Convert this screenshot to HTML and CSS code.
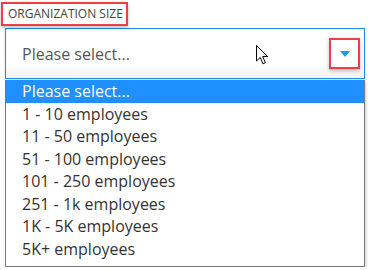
FILE: index.html
```html
<!DOCTYPE html>
<html lang="en">
<head>
  <meta charset="UTF-8" />
  <title>Organization size</title>
  <link rel="stylesheet" href="styles.css">
</head>
<body>
  <div class="field">
    <div class="field-label"><span class="mark label-mark">ORGANIZATION SIZE</span></div>
    <div class="select">
      <span class="select-value">Please select...</span>
      <span class="mark arrow-mark">
        <svg width="10" height="6" viewBox="0 0 10 6"><path d="M0 0 H10 L5 6 Z" fill="#1c9ae0"/></svg>
      </span>
    </div>
    <ul class="options">
      <li class="active">Please select...</li>
      <li>1 - 10 employees</li>
      <li>11 - 50 employees</li>
      <li>51 - 100 employees</li>
      <li>101 - 250 employees</li>
      <li>251 - 1k employees</li>
      <li>1K - 5K employees</li>
      <li>5K+ employees</li>
    </ul>
    <svg class="cursor" width="14" height="20" viewBox="0 0 14 20">
      <path d="M0.5 0.5 V16 L4.2 12.5 L7 18.8 L9.4 17.7 L6.7 11.6 H11.8 Z" fill="#fff" stroke="#000" stroke-width="1" stroke-linejoin="round"/>
    </svg>
  </div>
</body>
</html>
```

FILE: styles.css
```css
* {
  box-sizing: border-box;
}

body {
  margin: 0;
  background: #fff;
  font-family: 'Open Sans', sans-serif;
  color: #333;
}

.field {
  position: relative;
  padding: 1px 3px 0 5px;
}

.field-label {
  margin-left: -4px;
  height: 27px;
}

.mark {
  border: 2px solid #ee3e46;
  box-shadow: 0 2px 4px rgba(0, 0, 0, 0.25);
}

.label-mark {
  display: inline-block;
  height: 24px;
  padding: 0 3px 0 5px;
  font-size: 12px;
  line-height: 20px;
  color: #444;
}

.select {
  display: flex;
  align-items: center;
  justify-content: space-between;
  height: 51px;
  padding: 0 4px 0 16px;
  border: 1px solid #1e90e8;
  background: linear-gradient(#fff 70%, #f2f2f2);
  box-shadow: 0 2px 3px rgba(0, 0, 0, 0.15);
}

.select-value {
  font-size: 16px;
  color: #555;
}

.arrow-mark {
  display: flex;
  align-items: center;
  justify-content: center;
  width: 31px;
  height: 31px;
}

.options {
  list-style: none;
  margin: 1px 0 0;
  padding: 0 0 6px;
  border: 1px solid #777;
  border-top: none;
  box-shadow: 1px 2px 3px rgba(0, 0, 0, 0.2);
  font-size: 16px;
  line-height: 22.5px;
}

.options li {
  padding-left: 16px;
  color: #333;
}

.options li.active {
  background: #1e90ff;
  color: #fff;
}

.cursor {
  position: absolute;
  left: 256px;
  top: 45px;
}
```
